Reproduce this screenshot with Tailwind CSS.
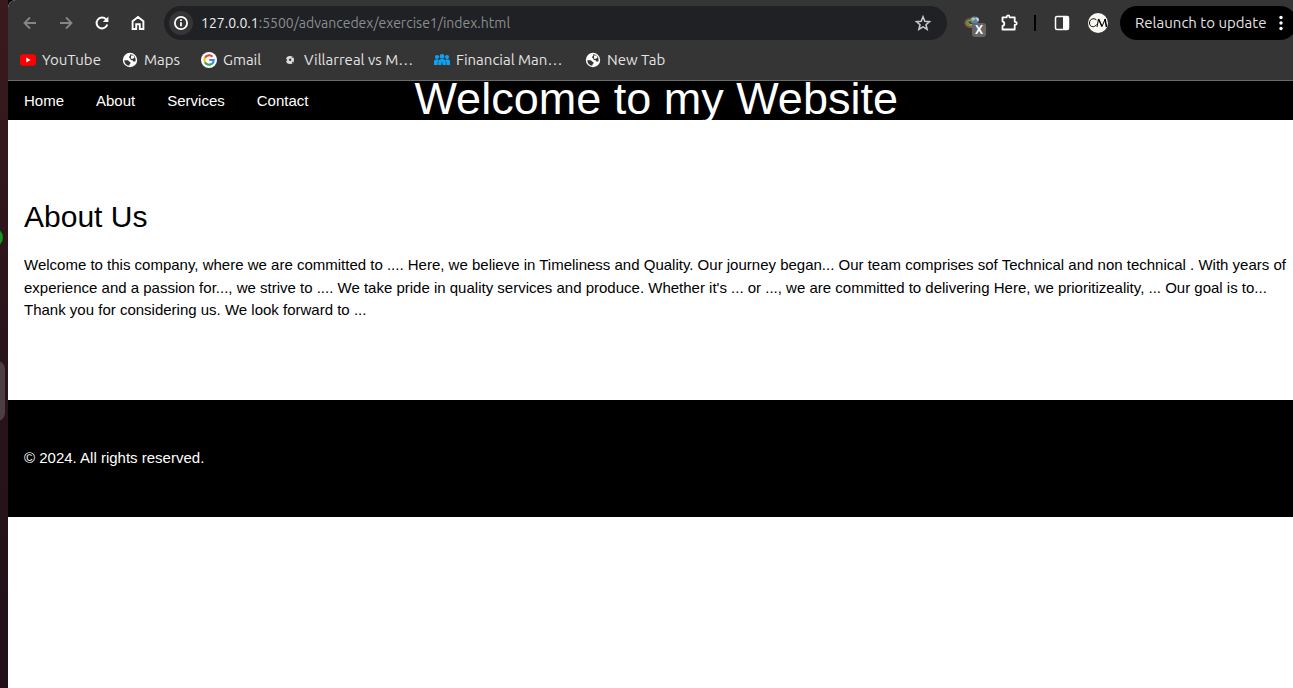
<!DOCTYPE html>
<html lang="en">
<head>
<meta charset="utf-8">
<meta name="viewport" content="width=device-width, initial-scale=1">
<title>Welcome to my Website</title>
<script src="https://cdn.jsdelivr.net/npm/@tailwindcss/browser@4"></script>
</head>
<body class="flex min-h-screen overflow-x-hidden bg-black font-['Liberation_Sans',Arial,sans-serif] text-[15px] leading-normal text-black">

<!-- Desktop edge behind the window -->
<aside class="relative w-2 shrink-0 overflow-hidden bg-linear-to-b from-[#3a1a1c] via-[#2a141b] to-[#211018]">
  <span class="absolute top-[228px] -left-4 size-[19px] rounded-full bg-[#0f9a1f]"></span>
  <span class="absolute top-[361px] -left-4 h-[60px] w-[21px] rounded-lg bg-[#4d3d44]"></span>
</aside>

<div class="flex min-w-0 flex-1 flex-col overflow-hidden rounded-tl-lg bg-white">
  <header class="border-b border-[#6b6b6b] bg-[#353535] font-['Ubuntu','Noto_Sans',sans-serif] text-[#e3e3e3]">
    <div class="flex h-[46px] items-center pl-1">
      <button aria-label="Back" class="flex size-9 items-center justify-center text-[#858585]">
        <svg class="size-4" viewBox="0 0 16 16" fill="none" stroke="currentColor" stroke-width="1.8"><path d="M14 8H3M8 2.5 2.5 8 8 13.5"/></svg>
      </button>
      <button aria-label="Forward" class="flex size-9 items-center justify-center text-[#858585]">
        <svg class="size-4" viewBox="0 0 16 16" fill="none" stroke="currentColor" stroke-width="1.8"><path d="M2 8h11M8 2.5 13.5 8 8 13.5"/></svg>
      </button>
      <button aria-label="Reload" class="flex size-9 items-center justify-center text-white">
        <svg class="size-4" viewBox="0 0 16 16" fill="none" stroke="currentColor" stroke-width="2"><path d="M13.2 9.4A5.4 5.4 0 1 1 12 4.4L13.4 6"/><path d="M14.4 1.5v5.6H8.8z" fill="currentColor" stroke="none"/></svg>
      </button>
      <button aria-label="Home" class="flex size-9 items-center justify-center text-white">
        <svg class="size-4" viewBox="0 0 16 16" fill="none" stroke="currentColor" stroke-width="1.9"><path d="M2.6 6.2 8 2l5.4 4.2V14H9.8V9.2H6.2V14H2.6z"/></svg>
      </button>

      <div class="ml-2 flex h-[34px] min-w-0 flex-1 items-center rounded-full bg-[#202124] pl-[5px]">
        <button aria-label="View site information" class="flex size-6 shrink-0 items-center justify-center rounded-full bg-[#353535] text-white">
          <svg class="size-4" viewBox="0 0 16 16" fill="none" stroke="currentColor" stroke-width="1.8"><circle cx="8" cy="8" r="6.1"/><path d="M8 7.2v4M8 4.3v1.8"/></svg>
        </button>
        <div class="relative ml-2 min-w-0 flex-1 text-sm">
          <input id="url" aria-label="Address" value="127.0.0.1:5500/advancedex/exercise1/index.html" class="peer w-full bg-transparent text-transparent outline-none focus:text-white">
          <span aria-hidden="true" class="pointer-events-none absolute inset-0 flex items-center whitespace-nowrap text-[#8c8d8f] peer-focus:hidden"><span class="text-[#eeeeee]">127.0.0.1</span>:5500/advancedex/exercise1/index.html</span>
        </div>
        <button aria-label="Bookmark this tab" class="mr-1.5 flex size-9 items-center justify-center text-[#c7c7c7]">
          <svg class="size-[18px]" viewBox="0 0 18 18" fill="none" stroke="currentColor" stroke-width="1.6"><path d="m9 2.8 1.8 4.4 4.7.4L12 10.700l1.100 4.600L9 12.900l-4.100 2.400L6 10.700 2.500 7.600l4.700-.4z"/></svg>
        </button>
      </div>

      <div class="-mr-1 ml-2 flex shrink-0 items-center">
        <button aria-label="Download extension" class="relative flex size-9 items-center justify-center">
          <svg class="size-[18px]" viewBox="0 0 18 18" fill="none"><ellipse cx="10.500" cy="6" rx="4.500" ry="3.500" fill="#5c80b4"/><path d="M7 5c2-2 4-1.500 5-.5L9 7z" fill="#b9cd70"/><path d="M12 3.500c2 0 3 1 3 3l-2 .5z" fill="#d0d5dc"/><path d="M6.500 5C3 5 .8 7 1.200 9.500c.5 3 4 4.500 8 3.500" stroke="#a5523c" stroke-width="1.300"/><path d="M7 6.500C4.500 6.300 2.500 7.500 2.800 9.500c.5 2 3.500 2.700 6.500 2" stroke="#6aa64e" stroke-width="1.500"/><path d="M4.500 8.500c-.3 2 2.500 2.400 5 1.500" stroke="#c9b35b"/></svg>
          <span class="absolute right-[5px] bottom-[4px] flex size-3.5 items-center justify-center rounded-[3px] bg-[#666] font-['Liberation_Sans'] text-xs font-bold text-white">X</span>
        </button>
        <button aria-label="Extensions" class="flex size-9 items-center justify-center text-white">
          <svg class="size-[18px]" viewBox="0 0 18 18" fill="none" stroke="currentColor" stroke-width="1.800" stroke-linejoin="round"><path d="M2.500 3.300h4.200V2.800a1.400 1.400 0 0 1 2.800 0v.5h5.200v4.500h.5a1.500 1.500 0 0 1 0 3h-.5v4.700H2.500v-3.700c2.400-.2 2.400-4 0-4.200z"/></svg>
        </button>
        <span class="mx-[7px] h-4 w-[2px] bg-black"></span>
        <button aria-label="Side panel" class="ml-px flex size-9 items-center justify-center text-white">
          <svg class="size-4" viewBox="0 0 16 16"><rect x="1.500" y="1.500" width="13" height="13" rx="1.500" fill="none" stroke="currentColor" stroke-width="1.500"/><path fill="currentColor" d="M9 1.500h5.500v13H9z"/></svg>
        </button>
        <button aria-label="Profile" class="flex size-9 items-center justify-center">
          <span class="flex size-5 items-center justify-center overflow-hidden rounded-full bg-[#faf8f2] text-black">
            <svg class="size-5" viewBox="0 0 20 20" fill="none" stroke="currentColor"><path stroke-width="1" d="M8.500 7.200C7 4.600 1.500 5.500 1.500 10c0 4.200 5 5 7 1.500M9 14l1.500-8M14 13.500l3.200-7.500"/><path stroke-width="1.500" d="m10.500 6 3.500 7.500M17 6l1.500 8"/></svg>
          </span>
        </button>
        <button class="ml-1 flex h-[34px] w-[177px] items-center justify-between rounded-full bg-black pr-[14px] pl-[15px] text-[15px] whitespace-nowrap text-[#e3e3e3]">
          Relaunch to update
          <svg class="h-4 w-1" viewBox="0 0 4 16" fill="#fff"><circle cx="2" cy="2.500" r="1.700"/><circle cx="2" cy="8" r="1.700"/><circle cx="2" cy="13.500" r="1.700"/></svg>
        </button>
      </div>
    </div>

    <nav aria-label="Bookmarks" class="flex h-[34px] items-start pt-1 pl-3 text-[15px] leading-5 whitespace-nowrap">
      <a href="#" class="flex w-[102px] shrink-0 items-center gap-1.5">
        <svg class="size-4" viewBox="0 0 16 16"><rect y="2.300" width="16" height="11.400" rx="3" fill="#f00"/><path d="m6.300 5.500 4.300 2.500-4.300 2.500z" fill="#fff"/></svg>YouTube</a>
      <a href="#" class="flex w-[79px] shrink-0 items-center gap-1.5">
        <svg class="size-4" viewBox="0 0 16 16"><circle cx="8" cy="8" r="7.200" fill="#fff"/><path d="M2.300 8.300h3.200c1.300 0 1.300 1.800 2.900 1.800v1.200c0 .8-1 .8-1 1.600v.8C4.500 13.500 2.300 11.300 2.300 8.300zM8.200 2.300v1.200c0 .9-1.200.8-1.200 1.600 0 1 1.400 1 1.400 2 0 1.500 2.800.8 2.800 2.300h2.200C14.500 5.500 11.500 2.300 8.200 2.300z" fill="#353535"/><path d="M9 3.500h2.500l1 2.300-1.500 1H9z" fill="#fff"/></svg>Maps</a>
      <a href="#" class="flex w-[81px] shrink-0 items-center gap-1.5">
        <svg class="size-4" viewBox="0 0 16 16" fill="none" stroke-width="2.200"><circle cx="8" cy="8" r="8" fill="#fff"/><path d="M4 5.700A4.700 4.700 0 0 1 11.500 4.700" stroke="#ea4335"/><path d="M4 5.700a4.700 4.700 0 0 0 0 4.700" stroke="#fbbc05"/><path d="M4 10.400a4.700 4.700 0 0 0 7 1.300" stroke="#34a853"/><path d="M8.200 8h4.500c0 1.700-.6 2.900-1.700 3.700" stroke="#4285f4"/></svg>Gmail</a>
      <a href="#" class="flex w-[152px] shrink-0 items-center gap-1.5">
        <svg class="size-4" viewBox="0 0 16 16"><circle cx="8" cy="8" r="4" fill="#ddd"/><path d="m7 7 1.700-.4.800 1.300-1 1.200-1.600-.5zM4.200 7l1 .6-.2 1.400-.8.200zM10 10l1.500-.6-1.200 2zM9.500 4.500l1.700 1.300-1.200.2z" fill="#333"/></svg>Villarreal vs M…</a>
      <a href="#" class="flex w-[151px] shrink-0 items-center gap-1.5">
        <svg class="size-4" viewBox="0 0 16 16" fill="#0da2f5"><circle cx="3" cy="5" r="2.100"/><circle cx="8" cy="4.400" r="2.400"/><circle cx="13" cy="5" r="2.100"/><path d="M0 13V9.500Q0 7.300 3 7.300 4 7.300 4.600 8 3.600 9 3.600 13zM4.300 13V9.500Q4.300 7 8 7t3.700 2.500V13H8.700L8 9l-.7 4zM12.400 13q0-4-1-5 .6-.7 1.600-.7 3 0 3 2.200V13z"/></svg>Financial Man…</a>
      <a href="#" class="flex shrink-0 items-center gap-1.5">
        <svg class="size-4" viewBox="0 0 16 16"><circle cx="8" cy="8" r="7.200" fill="#fff"/><path d="M2.300 8.300h3.200c1.300 0 1.300 1.800 2.900 1.800v1.200c0 .8-1 .8-1 1.600v.8C4.500 13.500 2.300 11.300 2.300 8.300zM8.200 2.300v1.200c0 .9-1.200.8-1.200 1.600 0 1 1.400 1 1.400 2 0 1.500 2.800.8 2.800 2.300h2.200C14.500 5.500 11.500 2.300 8.200 2.300z" fill="#353535"/><path d="M9 3.500h2.500l1 2.300-1.500 1H9z" fill="#fff"/></svg>New Tab</a>
    </nav>
  </header>

  <div class="flex h-[39px] items-start bg-black text-white">
    <nav aria-label="Main" class="flex leading-[39px]">
      <a href="#" class="px-4">Home</a>
      <a href="#about" class="px-4">About</a>
      <a href="#" class="px-4">Services</a>
      <a href="#" class="px-4">Contact</a>
    </nav>
    <h1 class="ml-[90px] text-[45px] leading-9 whitespace-nowrap">Welcome to my Website</h1>
  </div>

  <main id="about" class="pt-[74px] pr-0 pb-[78px] pl-4 max-lg:pr-4">
    <h2 class="text-3xl leading-[45px]">About Us</h2>
    <p class="mt-[15px]">Welcome to this company, where we are committed to .... Here, we believe in Timeliness and Quality. Our journey began... Our team comprises sof Technical and non technical . With years of experience and a passion for..., we strive to .... We take pride in quality services and produce. Whether it's ... or ..., we are committed to delivering Here, we prioritizeality, ... Our goal is to... Thank you for considering us. We look forward to ...</p>
  </main>

  <footer class="bg-black px-4 pt-[47px] pb-12 text-white">
    <p>© 2024. All rights reserved.</p>
  </footer>
</div>
</body>
</html>
